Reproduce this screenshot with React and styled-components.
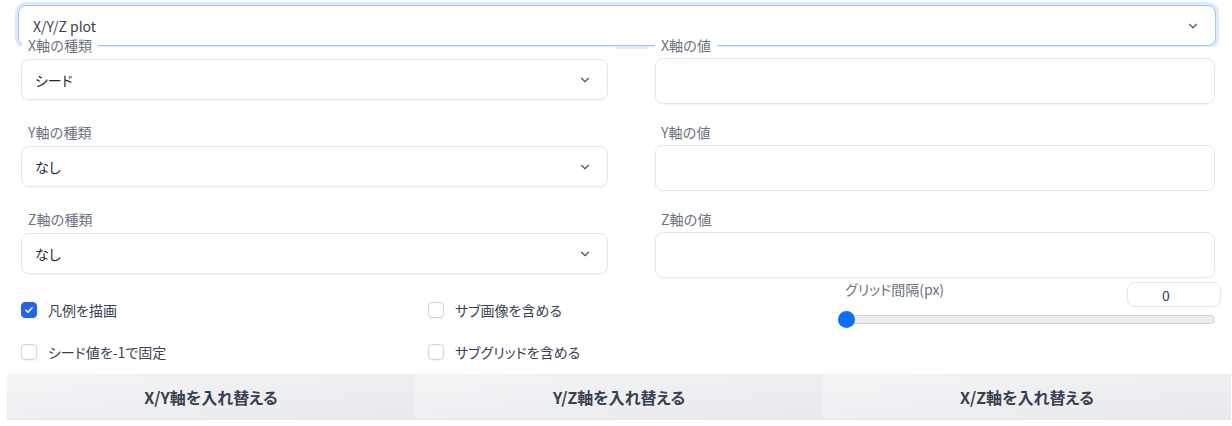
import React from 'react';
import styled, { createGlobalStyle } from 'styled-components';
import { ChevronDown } from 'lucide-react';

const GlobalStyle = createGlobalStyle`
  body {
    margin: 0;
    background: #ffffff;
    font-family: "Noto Sans CJK JP", "Noto Sans", sans-serif;
    font-feature-settings: "palt";
    color: #1f2937;
  }
`;

const Page = styled.div`
  width: 1232px;
  padding-top: 5px;
`;

const MainSelect = styled.div`
  margin: 0 16px 0 18px;
  height: 41px;
  box-sizing: border-box;
  border: 1px solid #9fc6f6;
  border-radius: 8px;
  box-shadow: 0 0 0 3px #ddebfd;
  display: flex;
  align-items: center;
  justify-content: space-between;
  padding: 0 15px 0 14px;
  font-size: 14px;
  color: #374151;
  background: #fff;
`;

const AxisGrid = styled.div`
  display: grid;
  grid-template-columns: 615px 1fr;
  column-gap: 33px;
  margin-top: 1px;
`;

const Column = styled.div`
  background: #fff;
  display: flex;
  flex-direction: column;
  gap: ${p => p.$gap}px;
  padding: ${p => p.$pad};
`;

const Field = styled.div`
  display: flex;
  flex-direction: column;
  align-items: flex-start;
`;

const Label = styled.span`
  display: inline-block;
  background: #fff;
  padding: 0 6px;
  margin-left: ${p => p.$indent}px;
  margin-top: ${p => (p.$first ? -10 : 0)}px;
  margin-bottom: ${p => p.$space}px;
  font-size: 14px;
  font-feature-settings: normal;
  line-height: 16px;
  color: #6b7280;
`;

const SelectBox = styled.div`
  align-self: stretch;
  height: 41px;
  box-sizing: border-box;
  border: 1px solid #e5e7eb;
  border-radius: 8px;
  box-shadow: 0 1px 2px rgba(0, 0, 0, 0.04);
  display: flex;
  align-items: center;
  justify-content: space-between;
  padding: 0 15px 0 13px;
  font-size: 14px;
  color: #1f2937;
`;

const TextBox = styled.div`
  align-self: stretch;
  height: 46px;
  box-sizing: border-box;
  border: 1px solid #e5e7eb;
  border-radius: 8px;
  box-shadow: 0 1px 2px rgba(0, 0, 0, 0.04);
`;

const Options = styled.div`
  display: grid;
  grid-template-columns: 407px 410px 1fr;
  padding: 0 11px 0 21px;
  margin-top: 3px;
`;

const CheckGroup = styled.div`
  display: flex;
  flex-direction: column;
  gap: 22px;
  padding-top: 19px;
`;

const CheckRow = styled.label`
  display: flex;
  align-items: center;
  gap: 11px;
  height: 20px;
  font-size: 14px;
  color: #374151;
`;

const Box = styled.span`
  width: 16px;
  height: 16px;
  box-sizing: border-box;
  border-radius: 4px;
  border: 1px solid ${p => (p.$checked ? '#2563eb' : '#d1d5db')};
  background: ${p => (p.$checked ? '#2563eb' : '#fff')};
  display: flex;
  align-items: center;
  justify-content: center;
  box-shadow: 0 1px 2px rgba(0, 0, 0, 0.05);
`;

const SliderBlock = styled.div`
  display: flex;
  flex-direction: column;
`;

const SliderHead = styled.div`
  display: flex;
  justify-content: space-between;
  align-items: flex-start;
`;

const SliderLabel = styled.span`
  padding-left: 7px;
  font-size: 14px;
  line-height: 16px;
  color: #6b7280;
`;

const NumberBox = styled.div`
  width: 94px;
  height: 25px;
  box-sizing: border-box;
  margin-top: 1px;
  padding-right: 16px;
  border: 1px solid #e5e7eb;
  border-radius: 8px;
  display: flex;
  align-items: center;
  justify-content: center;
  font-size: 14px;
  color: #374151;
`;

const Track = styled.div`
  margin: 8px 6px 0 0;
  height: 9px;
  box-sizing: border-box;
  border: 1px solid #d1d5db;
  border-radius: 5px;
  background: #eceef1;
  display: flex;
  align-items: center;
`;

const Thumb = styled.span`
  width: 17px;
  height: 17px;
  margin-left: -1px;
  border-radius: 50%;
  background: #0b6efd;
  flex-shrink: 0;
`;

const ButtonRow = styled.div`
  display: grid;
  grid-template-columns: repeat(3, 1fr);
  margin: 12px 1px 0 7px;
`;

const SwapButton = styled.button`
  height: 46px;
  border: none;
  border-bottom: 1px solid #e5e7eb;
  background: linear-gradient(to bottom right, #f3f4f6, #e8eaed);
  font-family: inherit;
  font-feature-settings: "palt";
  font-size: 16px;
  font-weight: 700;
  color: #374151;
  cursor: pointer;
`;

const axes = [
  { type: 'X軸の種類', value: 'シード', text: 'X軸の値' },
  { type: 'Y軸の種類', value: 'なし', text: 'Y軸の値' },
  { type: 'Z軸の種類', value: 'なし', text: 'Z軸の値' },
];

function Check({ checked, label }) {
  return (
    <CheckRow>
      <Box $checked={checked}>
        {checked && (
          <svg width="10" height="10" viewBox="0 0 16 16">
            <path d="M3 8.5l3.2 3L13 4.5" fill="none" stroke="#fff" strokeWidth="2.4" strokeLinecap="round" strokeLinejoin="round" />
          </svg>
        )}
      </Box>
      {label}
    </CheckRow>
  );
}

export default function App() {
  return (
    <Page>
      <GlobalStyle />
      <MainSelect>
        X/Y/Z plot
        <ChevronDown size={14} color="#4b5563" strokeWidth={2} />
      </MainSelect>

      <AxisGrid>
        <Column $gap={24} $pad="0 7px 0 21px">
          {axes.map((a, i) => (
            <Field key={a.type}>
              <Label $first={i === 0} $indent={1} $space={6}>{a.type}</Label>
              <SelectBox>
                {a.value}
                <ChevronDown size={14} color="#4b5563" strokeWidth={2} />
              </SelectBox>
            </Field>
          ))}
        </Column>
        <Column $gap={20} $pad="0 17px 0 7px">
          {axes.map((a, i) => (
            <Field key={a.text}>
              <Label $first={i === 0} $indent={0} $space={5}>{a.text}</Label>
              <TextBox />
            </Field>
          ))}
        </Column>
      </AxisGrid>

      <Options>
        <CheckGroup>
          <Check checked label="凡例を描画" />
          <Check label="シード値を-1で固定" />
        </CheckGroup>
        <CheckGroup>
          <Check label="サブ画像を含める" />
          <Check label="サブグリッドを含める" />
        </CheckGroup>
        <SliderBlock>
          <SliderHead>
            <SliderLabel>グリッド間隔(px)</SliderLabel>
            <NumberBox>0</NumberBox>
          </SliderHead>
          <Track>
            <Thumb />
          </Track>
        </SliderBlock>
      </Options>

      <ButtonRow>
        <SwapButton>X/Y軸を入れ替える</SwapButton>
        <SwapButton>Y/Z軸を入れ替える</SwapButton>
        <SwapButton>X/Z軸を入れ替える</SwapButton>
      </ButtonRow>
    </Page>
  );
}
